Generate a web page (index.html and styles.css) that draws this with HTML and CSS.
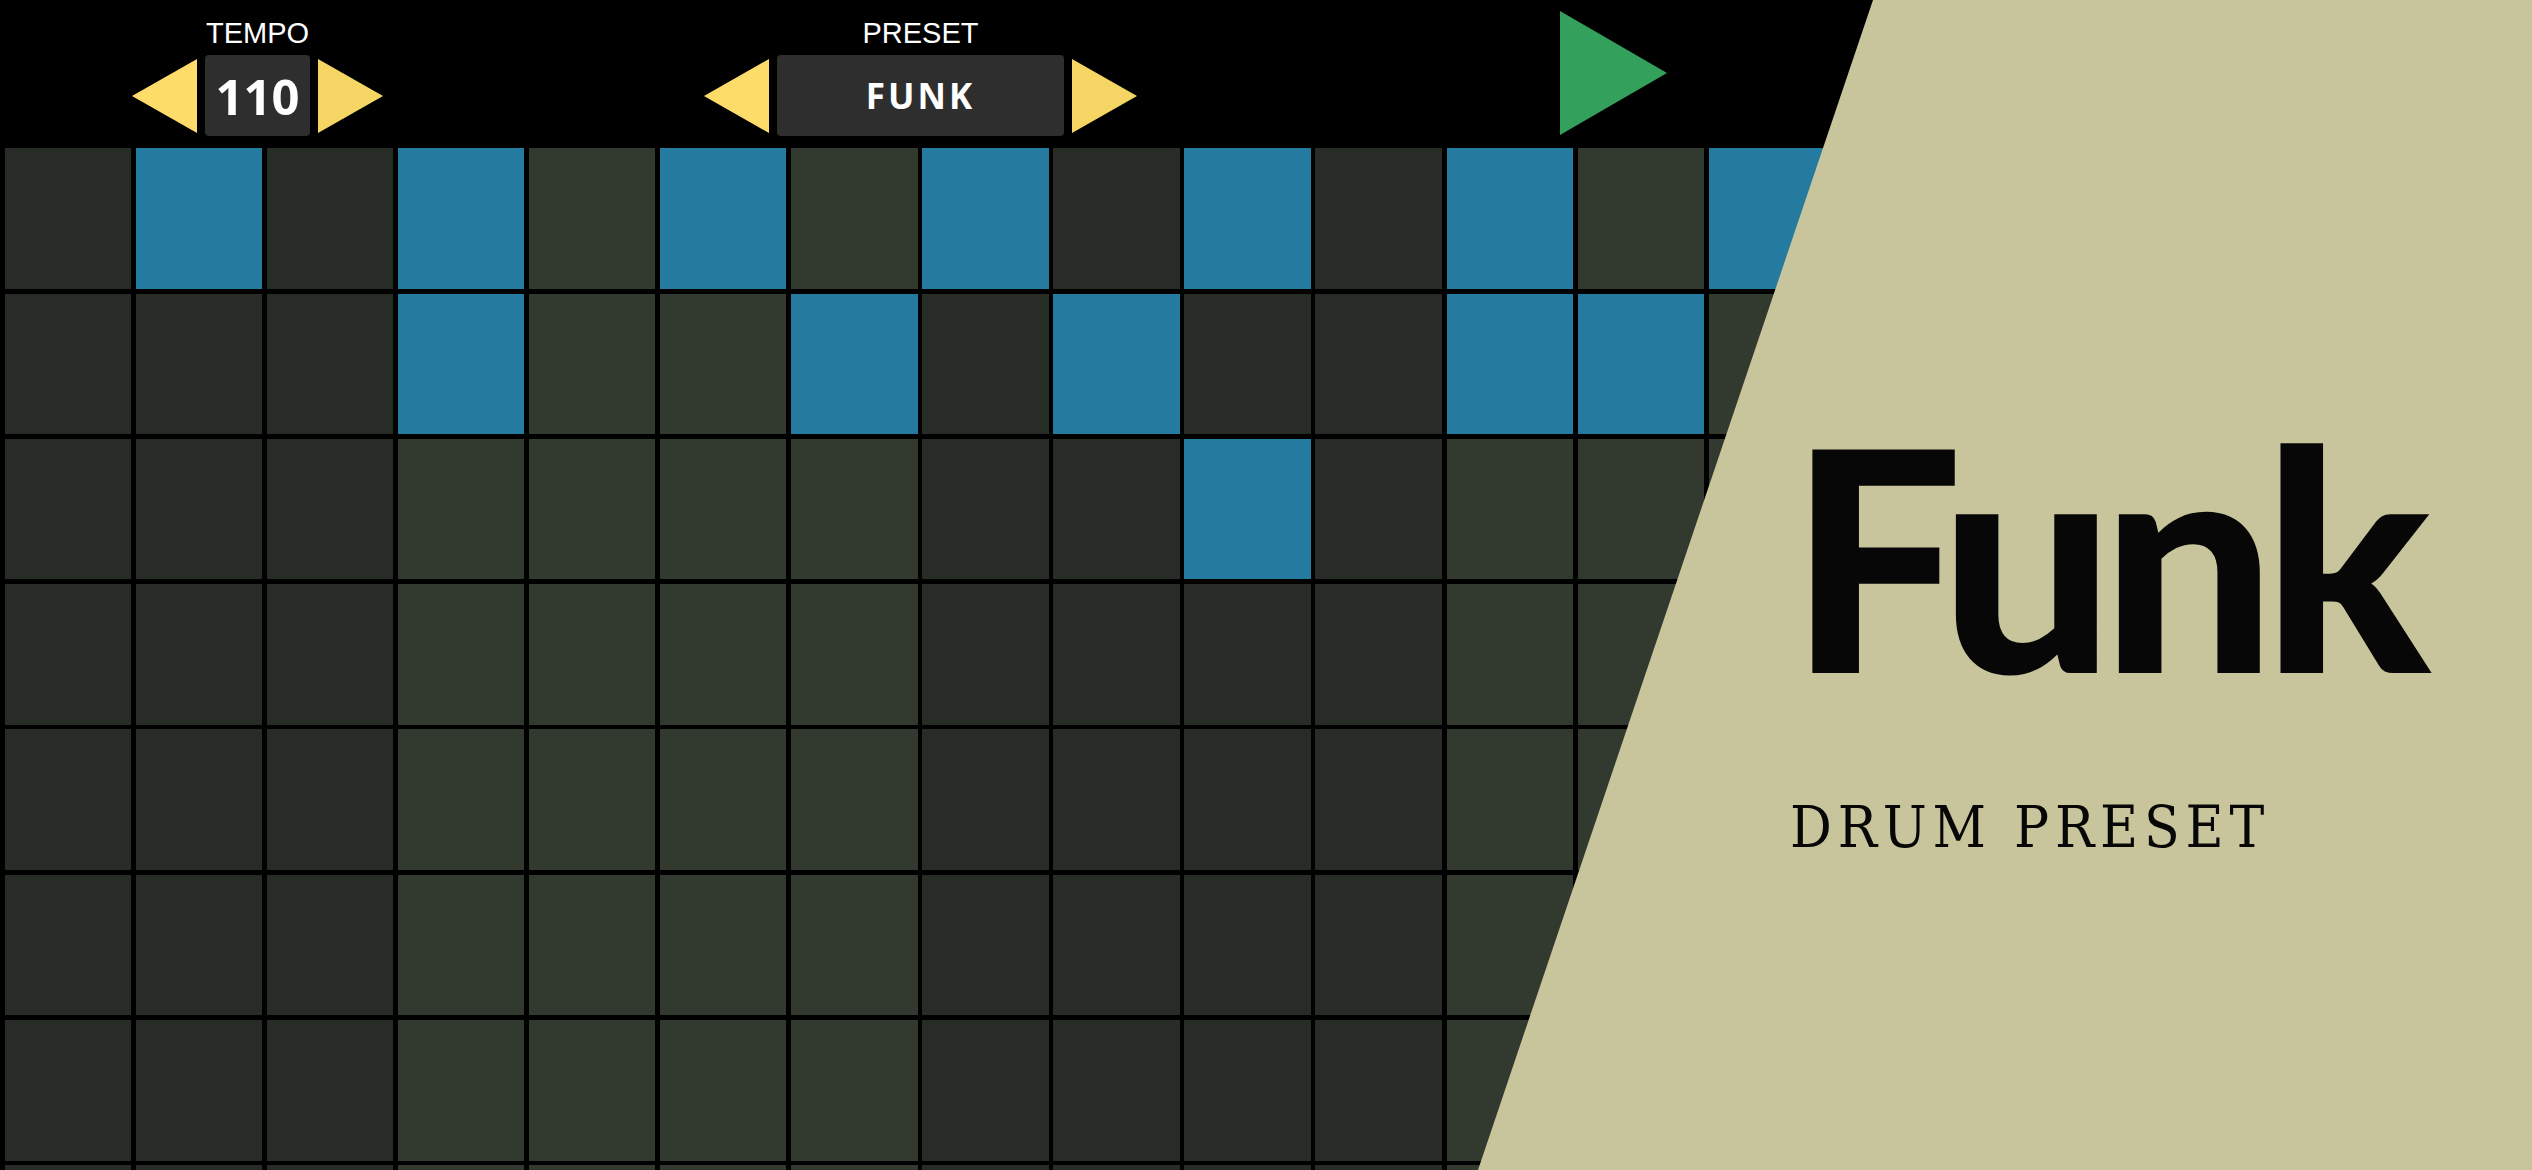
FILE: index.html
```html
<!DOCTYPE html>
<html lang="en">
<head>
  <meta charset="UTF-8" />
  <meta name="viewport" content="width=device-width, initial-scale=1.0" />
  <title>Drum Sequencer</title>
  <link rel="stylesheet" href="styles.css">
</head>
<body onload="pageLoaded()">
  <!-- Transport bar -->
  <header class="topbar">
    <div class="control">
      <div class="control-label">TEMPO</div>
      <div class="control-row">
        <button class="arrow arrow-left" aria-label="Slower"></button>
        <div class="readout readout-tempo">110</div>
        <button class="arrow arrow-right" aria-label="Faster"></button>
      </div>
    </div>
    <div class="control control-preset">
      <div class="control-label">PRESET</div>
      <div class="control-row">
        <button class="arrow arrow-left" aria-label="Previous preset"></button>
        <div class="readout readout-preset">FUNK</div>
        <button class="arrow arrow-right" aria-label="Next preset"></button>
      </div>
    </div>
    <button class="play" aria-label="Play"></button>
  </header>

  <!-- Step grid, filled in by pageLoaded() -->
  <div id="grid" class="grid"></div>

  <!-- Preset title card -->
  <aside class="preset-card">
    <h1 class="preset-name">Funk</h1>
    <p class="preset-kind">DRUM PRESET</p>
  </aside>

  <script>
    var STEPS = 16;
    // active steps for each drum row
    var pattern = [
      [1, 3, 5, 7, 9, 11, 13, 15],
      [3, 6, 8, 11, 12],
      [9],
      [],
      [],
      [],
      [],
      []
    ];

    function isLightColumn(step) {
      return (step >= 3 && step <= 6) || (step >= 11 && step <= 14);
    }

    function pageLoaded() {
      var grid = document.getElementById("grid");
      for (var r = 0; r < pattern.length; r++) {
        for (var s = 0; s < STEPS; s++) {
          var cell = document.createElement("div");
          cell.className = "cell";
          if (isLightColumn(s)) cell.className += " light";
          if (pattern[r].indexOf(s) !== -1) cell.className += " on";
          grid.appendChild(cell);
        }
      }
    }
  </script>
</body>
</html>
```

FILE: styles.css
```css
/* Page */
body {
  margin: 0;
  width: 2532px;
  height: 1170px;
  overflow: hidden;
  position: relative;
  background: #000;
  color: #fff;
  font-family: "Liberation Sans", Arial, sans-serif;
}

button {
  cursor: pointer;
}

/* Transport bar */
.topbar {
  display: flex;
  align-items: flex-start;
  height: 148.3px;
  box-sizing: border-box;
  padding: 16px 0 0 132px;
}

.control {
  display: flex;
  flex-direction: column;
  align-items: center;
}

.control-preset {
  margin-left: 321px;
}

.control-label {
  font-size: 29px;
  line-height: 34px;
  margin-bottom: 5px;
}

.control-row {
  display: flex;
  align-items: center;
  gap: 8px;
  height: 81px;
}

/* Triangle buttons drawn with borders */
.arrow {
  width: 0;
  height: 0;
  padding: 0;
  margin: 0;
  background: none;
  border-style: solid;
  border-color: transparent;
  border-width: 37px 0;
}

.arrow-left {
  border-right-width: 65px;
  border-right-color: #fddc6a;
}

.arrow-right {
  border-left-width: 65px;
  border-left-color: #f5d664;
}

.readout {
  height: 81px;
  display: flex;
  align-items: center;
  justify-content: center;
  background: #2e2e2e;
  border-radius: 4px;
  font-family: "Open Sans", "Liberation Sans", sans-serif;
  font-weight: 700;
}

.readout-tempo {
  width: 105px;
  font-size: 49px;
}

.readout-preset {
  width: 287px;
  font-size: 35px;
  letter-spacing: 3px;
}

.play {
  width: 0;
  height: 0;
  padding: 0;
  margin: -5px 0 0 423px;
  background: none;
  border-style: solid;
  border-color: transparent;
  border-width: 62px 0 62px 107px;
  border-left-color: #33a15c;
}

/* Step grid */
.grid {
  display: grid;
  grid-template-columns: repeat(16, 126.4px);
  grid-auto-rows: 140.6px;
  gap: 4.7px;
  padding-left: 4.7px;
}

.cell {
  background: #282c26;
}

.cell.light {
  background: #32392e;
}

.cell.on {
  background: #257aa0;
}

/* Preset title card, sits over the grid */
.preset-card {
  position: absolute;
  top: 0;
  right: 0;
  width: 1054px;
  height: 100%;
  box-sizing: border-box;
  padding: 400px 0 0 302px;
  background: #c8c59c;
  color: #070707;
  clip-path: polygon(395px 0, 100% 0, 100% 100%, 0 100%);
}

.preset-name {
  margin: 0 0 0 9px;
  font-family: Lato, "Liberation Sans", sans-serif;
  font-weight: 900;
  font-size: 308px;
  line-height: 1;
  letter-spacing: -13px;
}

.preset-kind {
  margin: 90px 0 0 10px;
  font-family: "DejaVu Serif", serif;
  font-stretch: condensed;
  font-size: 58px;
  line-height: 1;
  letter-spacing: 5.8px;
}
```
